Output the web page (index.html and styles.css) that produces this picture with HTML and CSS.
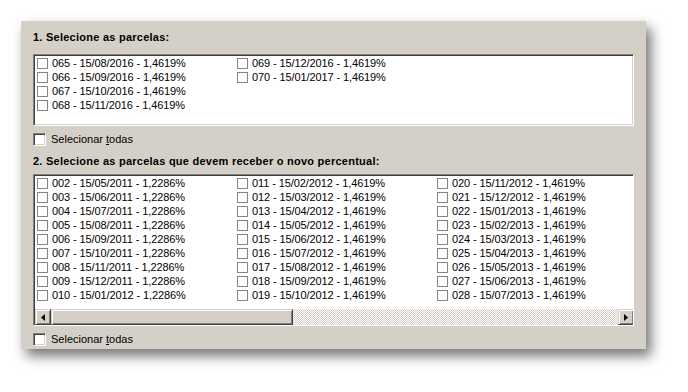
FILE: index.html
```html
<!DOCTYPE html>
<html>
<head>
<meta charset="utf-8">
<link rel="stylesheet" href="styles.css">
</head>
<body>
<div class="panel">
  <div class="title">1. Selecione as parcelas:</div>
  <div class="listbox lb1">
    <div class="items rows4">
      <div class="item"><span class="cb"></span>065 - 15/08/2016 - 1,4619%</div>
      <div class="item"><span class="cb"></span>066 - 15/09/2016 - 1,4619%</div>
      <div class="item"><span class="cb"></span>067 - 15/10/2016 - 1,4619%</div>
      <div class="item"><span class="cb"></span>068 - 15/11/2016 - 1,4619%</div>
      <div class="item"><span class="cb"></span>069 - 15/12/2016 - 1,4619%</div>
      <div class="item"><span class="cb"></span>070 - 15/01/2017 - 1,4619%</div>
    </div>
  </div>
  <label class="selall first"><span class="cb3d"></span><span>Selecionar <u>t</u>odas</span></label>
  <div class="title t2">2. Selecione as parcelas que devem receber o novo percentual:</div>
  <div class="listbox lb2">
    <div class="items rows9">
      <div class="item"><span class="cb"></span>002 - 15/05/2011 - 1,2286%</div>
      <div class="item"><span class="cb"></span>003 - 15/06/2011 - 1,2286%</div>
      <div class="item"><span class="cb"></span>004 - 15/07/2011 - 1,2286%</div>
      <div class="item"><span class="cb"></span>005 - 15/08/2011 - 1,2286%</div>
      <div class="item"><span class="cb"></span>006 - 15/09/2011 - 1,2286%</div>
      <div class="item"><span class="cb"></span>007 - 15/10/2011 - 1,2286%</div>
      <div class="item"><span class="cb"></span>008 - 15/11/2011 - 1,2286%</div>
      <div class="item"><span class="cb"></span>009 - 15/12/2011 - 1,2286%</div>
      <div class="item"><span class="cb"></span>010 - 15/01/2012 - 1,2286%</div>
      <div class="item"><span class="cb"></span>011 - 15/02/2012 - 1,4619%</div>
      <div class="item"><span class="cb"></span>012 - 15/03/2012 - 1,4619%</div>
      <div class="item"><span class="cb"></span>013 - 15/04/2012 - 1,4619%</div>
      <div class="item"><span class="cb"></span>014 - 15/05/2012 - 1,4619%</div>
      <div class="item"><span class="cb"></span>015 - 15/06/2012 - 1,4619%</div>
      <div class="item"><span class="cb"></span>016 - 15/07/2012 - 1,4619%</div>
      <div class="item"><span class="cb"></span>017 - 15/08/2012 - 1,4619%</div>
      <div class="item"><span class="cb"></span>018 - 15/09/2012 - 1,4619%</div>
      <div class="item"><span class="cb"></span>019 - 15/10/2012 - 1,4619%</div>
      <div class="item"><span class="cb"></span>020 - 15/11/2012 - 1,4619%</div>
      <div class="item"><span class="cb"></span>021 - 15/12/2012 - 1,4619%</div>
      <div class="item"><span class="cb"></span>022 - 15/01/2013 - 1,4619%</div>
      <div class="item"><span class="cb"></span>023 - 15/02/2013 - 1,4619%</div>
      <div class="item"><span class="cb"></span>024 - 15/03/2013 - 1,4619%</div>
      <div class="item"><span class="cb"></span>025 - 15/04/2013 - 1,4619%</div>
      <div class="item"><span class="cb"></span>026 - 15/05/2013 - 1,4619%</div>
      <div class="item"><span class="cb"></span>027 - 15/06/2013 - 1,4619%</div>
      <div class="item"><span class="cb"></span>028 - 15/07/2013 - 1,4619%</div>
    </div>
    <div class="hscroll">
      <div class="btn"><svg width="4" height="7" viewBox="0 0 4 7"><path d="M4 0V7L0 3.5Z" fill="#000"/></svg></div>
      <div class="thumb"></div>
      <div class="track"></div>
      <div class="btn"><svg width="4" height="7" viewBox="0 0 4 7"><path d="M0 0V7L4 3.5Z" fill="#000"/></svg></div>
    </div>
  </div>
  <label class="selall"><span class="cb3d"></span><span>Selecionar <u>t</u>odas</span></label>
</div>
</body>
</html>
```
FILE: styles.css
```css
html, body {
  margin: 0;
  padding: 0;
  background: #fff;
}
body {
  width: 688px;
  height: 392px;
  padding: 21px 0 0 21px;
  box-sizing: border-box;
  font-family: "Liberation Sans", Arial, sans-serif;
  font-size: 11px;
  color: #000;
}
.panel {
  width: 625px;
  height: 328px;
  box-sizing: border-box;
  background: #d4d0c8;
  padding: 9px 12px 0 12px;
  display: flex;
  flex-direction: column;
  box-shadow: 5px 7px 12px rgba(0, 0, 0, 0.55);
}
.title {
  font-weight: bold;
  height: 14px;
  line-height: 14px;
  letter-spacing: 0.25px;
  margin-bottom: 10px;
  white-space: nowrap;
}
.title.t2 {
  margin-bottom: 6px;
}
.listbox {
  width: 601px;
  box-sizing: border-box;
  background: #fff;
  border: 1px solid;
  border-color: #808080 #fff #fff #808080;
  display: flex;
  flex-direction: column;
  overflow: hidden;
}
.listbox > .items {
  border: 1px solid;
  border-bottom: none;
  border-right: none;
  border-color: #404040;
}
.lb1 {
  height: 72px;
  box-shadow: inset -1px -1px 0 #d4d0c8;
}
.lb1 > .items {
  flex: 1;
}
.lb2 {
  height: 152px;
}
.items {
  display: grid;
  grid-auto-flow: column;
  grid-auto-columns: 200px;
  overflow: hidden;
}
.rows4 {
  grid-template-rows: repeat(4, 14px);
}
.rows9 {
  grid-template-rows: repeat(9, 14px);
  flex: 1;
}
.item {
  display: flex;
  align-items: center;
  height: 14px;
  line-height: 14px;
  white-space: nowrap;
  padding-left: 2px;
  letter-spacing: -0.1px;
}
.cb {
  width: 11px;
  height: 11px;
  box-sizing: border-box;
  border: 1px solid #858585;
  background: #fff;
  margin-right: 4px;
  flex: none;
}
.selall {
  display: flex;
  align-items: center;
  height: 14px;
  line-height: 14px;
  margin-top: 6px;
  white-space: pre;
}
.selall.first {
  margin-bottom: 8px;
}
.cb3d {
  width: 13px;
  height: 13px;
  box-sizing: border-box;
  background: #fff;
  border: 1px solid;
  border-color: #808080 #fff #fff #808080;
  box-shadow: inset 1px 1px 0 #404040, inset -1px -1px 0 #d4d0c8;
  margin-right: 5px;
  flex: none;
}
u {
  text-decoration: underline;
  text-underline-offset: 1px;
}
.hscroll {
  height: 16px;
  display: flex;
  border-left: 1px solid #404040;
  flex: none;
  margin-right: -1px;
}
.btn, .thumb {
  height: 16px;
  box-sizing: border-box;
  background: #d4d0c8;
  border: 1px solid;
  border-color: #d4d0c8 #404040 #404040 #d4d0c8;
  box-shadow: inset 1px 1px 0 #fff, inset -1px -1px 0 #808080;
  display: flex;
  align-items: center;
  justify-content: center;
}
.btn {
  width: 16px;
  flex: none;
}
.thumb {
  width: 242px;
  flex: none;
}
.track {
  flex: 1;
  background-color: #fff;
  background-image: conic-gradient(#d4d0c8 25%, #fff 0 50%, #d4d0c8 0 75%, #fff 0);
  background-size: 2px 2px;
}
```
